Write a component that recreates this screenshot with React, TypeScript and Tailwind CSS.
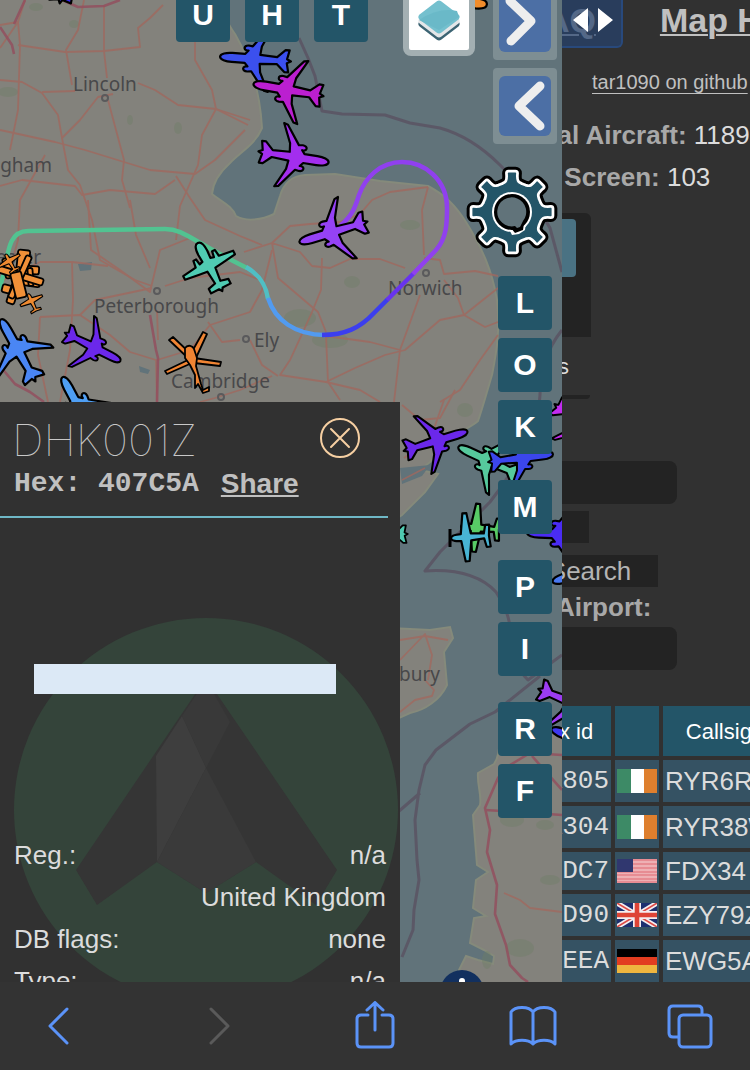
import { useState } from "react";

const AIRLINER =
  "M0 -35C3 -35 4.500 -29 4.500 -23L4.500 -10L8 -7C7 -12 13 -13 13 -7L12.500 -3L31 11L32 15L13 6L4.500 5L3.500 22L11 30L11 34L2 32L0 36L-2 32L-11 34L-11 30L-3.500 22L-4.500 5L-13 6L-32 15L-31 11L-12.500 -3L-13 -7C-13 -13 -7 -12 -8 -7L-4.500 -10L-4.500 -23C-4.500 -29 -3 -35 0 -35Z";
const PROP =
  "M0 -27C4 -27 5 -21 5 -16L4.500 -8L8 -7L9 -13L12 -13L13 -6L28 -4L28 0L13 2L4.500 3L3 17L11 19L11 24L2 24L0 27L-2 24L-11 24L-11 19L-3 17L-4.500 3L-13 2L-28 0L-28 -4L-13 -6L-12 -13L-9 -13L-8 -7L-4.500 -8L-5 -16C-5 -21 -4 -27 0 -27Z";
const LIGHT =
  "M0 -18C3 -18 3.500 -12 3.500 -8L24 -5L24 -1L3.500 2L2.500 15L11 17L11 21L0 20L-11 21L-11 17L-2.500 15L-3.500 2L-24 -1L-24 -5L-3.500 -8C-3.500 -12 -3 -18 0 -18Z";

interface Aircraft {
  shape: string;
  x: number;
  y: number;
  heading: number;
  color: string;
  scale: number;
}

const AIRCRAFT: Aircraft[] = [
  { shape: AIRLINER, x: 66, y: -32, heading: 10, color: "#3a2cf0", scale: 1 },
  { shape: AIRLINER, x: 255, y: 59, heading: 274, color: "#3b50ee", scale: 1 },
  { shape: AIRLINER, x: 288, y: 90, heading: 280, color: "#bb1fd0", scale: 1 },
  { shape: AIRLINER, x: 294, y: 157, heading: 99, color: "#a32eee", scale: 1 },
  { shape: AIRLINER, x: 333, y: 232, heading: 253, color: "#9542f5", scale: 1 },
  { shape: PROP, x: 210, y: 267, heading: 333, color: "#50cbb2", scale: 1 },
  { shape: AIRLINER, x: 18, y: 350, heading: 331, color: "#4a86f4", scale: 1 },
  { shape: AIRLINER, x: 93, y: 347, heading: 117, color: "#6b28ea", scale: 0.88 },
  { shape: AIRLINER, x: 79, y: 408, heading: 332, color: "#4f9ff4", scale: 1 },
  { shape: AIRLINER, x: 436, y: 441, heading: 73, color: "#6b28ea", scale: 0.94 },
  { shape: AIRLINER, x: 489, y: 461, heading: 295, color: "#56c99c", scale: 0.96 },
  { shape: AIRLINER, x: 521, y: 458, heading: 83, color: "#3b46ec", scale: 0.92 },
  { shape: LIGHT, x: 479, y: 528, heading: 275, color: "#58cb66", scale: 1 },
  { shape: LIGHT, x: 469, y: 537, heading: 266, color: "#48b4d4", scale: 1 },
  { shape: AIRLINER, x: 379, y: 535, heading: 268, color: "#4fc9b0", scale: 0.8 },
  { shape: AIRLINER, x: 562, y: 534, heading: 272, color: "#4a2cf4", scale: 1 },
  { shape: AIRLINER, x: 580, y: 424, heading: 128, color: "#c22cf0", scale: 0.9 },
  { shape: AIRLINER, x: 571, y: 702, heading: 112, color: "#9b3cf2", scale: 0.98 },
  { shape: AIRLINER, x: 584, y: 742, heading: 292, color: "#3e38f0", scale: 1 },
  { shape: AIRLINER, x: 586, y: 571, heading: 252, color: "#4878f0", scale: 1 },
  { shape: PROP, x: 460, y: 2, heading: 95, color: "#f08c2c", scale: 1 },
  { shape: LIGHT, x: 10, y: 262, heading: 330, color: "#ee8a30", scale: 0.5 },
  { shape: LIGHT, x: 32, y: 302, heading: 335, color: "#ee8a30", scale: 0.5 },
];

// parked aircraft piled on one spot: left, top, width, height, rotation
const CLUSTER: [number, number, number, number, number][] = [
  [17, 250, 12, 26, 6],
  [4, 258, 9, 20, -12],
  [22, 266, 17, 8, 4],
  [20, 278, 20, 8, 8],
  [2, 286, 18, 8, 14],
  [9, 284, 8, 20, 18],
  [28, 268, 5, 18, -4],
  [-4, 272, 48, 7, 17],
  [17, 254, 6, 46, 24],
  [13, 272, 11, 26, -14],
];

const ROADS = [
  "M0 48L18 22L25 0",
  "M18 22L0 25M18 22L20 45L18 110L10 150",
  "M18 45L65 52L104 51L140 47L138 28L150 18L163 5",
  "M104 5L104 51L107 78",
  "M84 0L78 30L66 50L72 85",
  "M0 80L22 82L42 93L58 115L62 138L80 120L98 97L113 94",
  "M42 92L75 91M138 83L155 90L178 105L216 109L250 120",
  "M108 100L124 160L122 180L130 208",
  "M0 130L55 142L85 150L124 162L150 170L195 174L215 160L245 130",
  "M216 109L202 135L198 165L180 206L176 240",
  "M62 138L68 170L80 185L92 220L100 260L135 280L152 286",
  "M45 155L20 200L18 240L12 262",
  "M0 186L22 180L75 186L82 195L110 190L155 194L175 180",
  "M176 176L190 198L205 220L240 236L262 245",
  "M195 0L195 60L212 90L216 109L248 125",
  "M88 200L91 250L120 270L150 292L160 250L190 238",
  "M130 200L136 235L150 268",
  "M0 282L40 262L72 262L108 266",
  "M72 262L73 300L70 350L60 402",
  "M40 317L80 315L110 335L130 352L156 360L157 402",
  "M40 317L38 355L48 402M80 315L95 300L152 288",
  "M157 360L190 350L210 325L250 312L262 290L272 250",
  "M165 286L190 278L240 272L260 280",
  "M208 322L222 342L240 340M250 340L262 365L278 376",
  "M244 252L272 243L290 226L310 224L340 222L360 214L372 200L390 192L428 187",
  "M272 243L278 278L318 312L326 332M272 243L300 252L312 266L330 268L350 259L380 259L405 268",
  "M322 258L321 290L312 312L290 360L280 375L326 382L355 368L385 355L405 350L440 320L464 315",
  "M326 335L328 382L340 400M326 382L360 390L380 402",
  "M326 336L370 342L400 350L394 402M400 350L420 295",
  "M428 187L422 210L424 255M424 258L440 260L444 274L475 271L498 276",
  "M444 280L458 298L464 315L485 327L498 322M464 315L498 288",
  "M498 335L480 360L460 390L440 402",
  "M200 402L215 398L240 390L272 376M157 310L158 340",
  "M402 405L420 420L440 418L455 390M402 480L425 468M444 400L430 440L404 458",
  "M400 640L425 636L448 640M400 660L425 634L432 655L428 680M400 712L415 700L432 696L434 690L425 680",
];

const MOTORWAYS = [
  "M0 27L12 45L14 54",
  "M14 24L25 0M62 0L78 7L104 6L120 0",
  "M150 315L156 350L158 358L157 402",
  "M0 366L15 384L30 392L44 402",
  "M562 755L530 753L510 765L498 778L485 808L490 830L487 852L497 885L495 914L506 945L510 965L522 978L528 982",
  "M532 756L562 790M485 810L520 812L562 815",
];

const WOODS: [number, number, number, number][] = [
  [8, 92, 10, 5],
  [36, 7, 7, 4],
  [74, 24, 5, 4],
  [178, 128, 4, 6],
  [130, 120, 3, 5],
  [300, 318, 16, 9],
  [330, 340, 18, 8],
  [352, 282, 8, 6],
  [410, 225, 10, 5],
  [465, 410, 8, 7],
  [512, 820, 12, 7],
  [545, 825, 9, 5],
  [520, 948, 14, 9],
  [487, 960, 5, 9],
  [550, 880, 10, 5],
];

const TRACK = [
  { d: "M-2 290C10 270 2 231 28 231L165 229C184 229 190 240 247 268", color: "#52c391" },
  { d: "M246 267C260 275 266 285 268 299", color: "#50bfc4" },
  { d: "M268 298C275 320 295 335 325 335", color: "#529bf0" },
  { d: "M322 335C345 335 360 328 374 313L388 299", color: "#3c3eee" },
  { d: "M387 300L414 273", color: "#6833ee" },
  { d: "M413 274L436 250C447 238 447 222 447 208C447 180 425 162 402 162C380 162 365 178 359 195C355 208 352 216 340 226", color: "#9040ee" },
];

const polar = (r: number, deg: number) => {
  const a = (deg * Math.PI) / 180;
  return `${(r * Math.cos(a)).toFixed(2)} ${(r * Math.sin(a)).toFixed(2)}`;
};

// eight rounded teeth joined by concave valleys
const GEAR =
  `M${polar(39, -5)}` +
  Array.from({ length: 8 }, (_, i) => {
    const t = i * 45;
    return `L${polar(39, t + 5)}C${polar(29, t + 5)} ${polar(29, t + 11)} ${polar(28, t + 18)}L${polar(28, t + 27)}C${polar(29, t + 34)} ${polar(29, t + 40)} ${polar(39, t + 40)}`;
  }).join("") +
  "Z";

function MapCanvas() {
  return (
    <svg
      className="absolute inset-0 h-full w-full"
      viewBox="0 0 562 982"
      preserveAspectRatio="xMaxYMin slice"
      role="img"
      aria-label="Aircraft map"
    >
      <rect width="562" height="982" fill="#61737a" />
      <g fill="#83827c" stroke="#858a7b" strokeWidth="2">
        <path d="M-5 -5H214C222 10 226 22 235 34C250 60 260 90 262 128C255 145 240 152 230 163C220 172 213 182 212 194C222 202 232 206 236 216C246 222 262 220 274 214L280 196C284 182 292 176 305 175L335 174L380 181L428 186C445 195 455 205 466 222C482 248 492 270 497 300C500 330 497 350 492 375C486 395 482 410 478 421C470 428 458 432 448 440L430 462L420 470L438 474L425 492L402 515L380 530H-5Z" />
        <path d="M390 628L430 630L450 627L453 638L444 652L447 685C440 700 425 710 410 713L390 722Z" />
        <path d="M570 733L500 733C499 745 500 755 494 764L478 773C477 785 482 795 480 805L473 815L477 865L488 872L476 880L473 908L486 916L474 918L470 943L484 950L494 956L493 964L478 960L466 956L459 970L454 990H570Z" />
      </g>
      <g fill="#6f7f66" opacity="0.4">
        {WOODS.map(([cx, cy, rx, ry]) => (
          <ellipse key={`${cx}-${cy}`} cx={cx} cy={cy} rx={rx} ry={ry} />
        ))}
      </g>
      <path d="M78 264L92 262L91 270L80 271ZM139 366L150 370L148 374L140 372ZM400 468L430 465L422 476L402 484Z" fill="#61737a" />
      <g fill="none" stroke="#a0695f" strokeWidth="1.8" strokeLinejoin="round" opacity="0.8">
        {ROADS.map((d) => (
          <path key={d} d={d} />
        ))}
        <path d="M504 893L520 900L530 908L562 912" />
      </g>
      <g fill="none" stroke="#93505f" strokeWidth="2.6" strokeLinejoin="round" opacity="0.85">
        {MOTORWAYS.map((d) => (
          <path key={d} d={d} />
        ))}
      </g>
      <g fill="none" stroke="#594f60" strokeWidth="3" strokeLinejoin="round" opacity="0.75">
        <path d="M299 38L308 58L315 76L322 111L342 114L385 115L410 123L440 128C465 135 485 150 500 165C525 190 540 210 550 228L562 272" />
        <path d="M562 330C550 345 540 365 540 395C538 430 515 470 490 502L440 552L425 571C455 569 480 575 496 592C505 605 510 618 512 640C512 660 520 672 528 680L562 655" />
        <path d="M540 676L495 712L470 724L436 750L425 765L419 790L415 820L417 860L419 880L414 910L413 930L402 957M420 793L398 812" />
      </g>

      <g fill="#48484a" fontFamily="'Noto Sans', sans-serif" fontSize="19">
        <text x="73" y="91">Lincoln</text>
        <text x="52" y="172" textAnchor="end">Nottingham</text>
        <text x="41" y="264" textAnchor="end">Leicester</text>
        <text x="94" y="313">Peterborough</text>
        <text x="388" y="295">Norwich</text>
        <text x="254" y="347">Ely</text>
        <text x="171" y="388">Cambridge</text>
        <text x="440" y="681" textAnchor="end">Canterbury</text>
      </g>
      <g fill="none" stroke="#5a5a5c" strokeWidth="2">
        <circle cx="105" cy="98" r="3" />
        <circle cx="157" cy="291" r="3" />
        <circle cx="426" cy="273" r="3" />
        <circle cx="246" cy="339" r="3" />
        <circle cx="221" cy="397" r="3" />
      </g>

      <g fill="none" strokeWidth="4.5">
        {TRACK.map((t) => (
          <path key={t.d} d={t.d} stroke={t.color} />
        ))}
      </g>

      <g fill="#f09038" stroke="#000" strokeWidth="1.8">
        {CLUSTER.map(([x, y, w, h, angle]) => (
          <rect
            key={`${x}-${y}`}
            x={x}
            y={y}
            width={w}
            height={h}
            rx="2"
            transform={`rotate(${angle} ${x + w / 2} ${y + h / 2})`}
          />
        ))}
      </g>

      {AIRCRAFT.map((a) => (
        <path
          key={`${a.x}-${a.y}`}
          d={a.shape}
          fill={a.color}
          stroke="#000"
          strokeWidth="2.2"
          strokeLinejoin="round"
          transform={`translate(${a.x} ${a.y}) rotate(${a.heading}) scale(${a.scale})`}
        />
      ))}
      <path d="M450 529V547" stroke="#000" strokeWidth="3" />

      {/* Helicopter */}
      <g stroke="#000" strokeWidth="1.8" strokeLinejoin="round" fill="#f08433">
        <path d="M173 337L192 355L189 359L169 340ZM203 332L207 334L195 360L189 357ZM194 358L221 362L220 366L194 363ZM165 371L190 359L192 363L167 374Z" />
        <path d="M185 348C188 344 193 346 194 349L197 358L196 366L201 384L203 390L209 387L209 391L203 393L198 384L195 388L195 375L190 365L185 358Z" />
      </g>
    </svg>
  );
}

function KeyButton({ label }: { label: string }) {
  return (
    <button className="flex h-[54px] w-[54px] items-center justify-center rounded bg-[#235568] text-[30px] leading-8 font-bold text-white">
      {label}
    </button>
  );
}

function MapControls() {
  return (
    <>
      <div className="absolute top-0 right-[194px] -mt-3 flex gap-[15px]">
        <KeyButton label="U" />
        <KeyButton label="H" />
        <KeyButton label="T" />
      </div>

      <button
        aria-label="Layers"
        className="absolute top-0 right-[87px] -mt-4 h-[72px] w-[72px] rounded-lg border-[6px] border-[#a3afb2] bg-white"
      >
        <svg viewBox="0 0 60 60" className="h-full w-full" strokeWidth="7" strokeLinejoin="round">
          <path d="M30 22L47 34L30 47L13 34Z" fill="#3c6473" stroke="#3c6473" />
          <path d="M30 19L47 31L30 44L13 31Z" fill="#e4e6e8" stroke="#e4e6e8" />
          <path d="M30 14L47 27L30 40L13 27Z" fill="#74c0ce" stroke="#74c0ce" />
          <path d="M10 30Q30 17 48 21L50 27L30 40Z" fill="#6ab9c8" />
        </svg>
      </button>

      <div className="absolute top-0 right-0 -mt-4 flex flex-col items-end">
        <div className="flex flex-col gap-2 pr-[5px]">
          <button aria-label="Expand" className="h-[76px] w-16 rounded bg-[#7e8e93] px-1.5 py-2">
            <svg viewBox="0 0 52 60" className="h-full w-full">
              <rect width="52" height="60" rx="6" fill="#4c6fa5" />
              <path d="M11 9L32 29L12 49" fill="none" stroke="#eee" strokeWidth="9" strokeLinecap="round" strokeLinejoin="round" />
            </svg>
          </button>
          <button aria-label="Collapse" className="h-[76px] w-16 rounded bg-[#7e8e93] px-1.5 py-2">
            <svg viewBox="0 0 52 60" className="h-full w-full">
              <rect width="52" height="60" rx="6" fill="#4c6fa5" />
              <path d="M41 10L20 30L41 50" fill="none" stroke="#eee" strokeWidth="9" strokeLinecap="round" strokeLinejoin="round" />
            </svg>
          </button>
        </div>

        <button aria-label="Settings" className="mt-5 mr-0.5 h-24 w-24">
          <svg viewBox="-48 -48 96 96" className="h-full w-full">
            <path d={GEAR} fill="#000" stroke="#000" strokeWidth="13" strokeLinejoin="round" />
            <path d={GEAR} fill="#fff" stroke="#fff" strokeWidth="7" strokeLinejoin="round" />
            <path d={GEAR} fill="#235568" stroke="#235568" strokeWidth="1.5" strokeLinejoin="round" />
            <circle r="20" fill="#fff" />
            <path d="M-3 17L0 23L7 22L13 18L14 10Z" fill="#fff" />
            <circle r="18" fill="#000" />
            <path d="M-1 16L3 21L11 18L12 11Z" fill="#000" />
            <path d="M3 14A14.500 14.500 0 1 1 11 9L8 15L5 16Z" fill="#61737a" />
          </svg>
        </button>

        <div className="mt-4 flex flex-col gap-[26px] pr-2.5">
          <div className="flex flex-col gap-2">
            <KeyButton label="L" />
            <KeyButton label="O" />
            <KeyButton label="K" />
          </div>
          <KeyButton label="M" />
          <div className="flex flex-col gap-2">
            <KeyButton label="P" />
            <KeyButton label="I" />
          </div>
          <div className="flex flex-col gap-2">
            <KeyButton label="R" />
            <KeyButton label="F" />
          </div>
        </div>
      </div>

      <button
        aria-label="Attribution"
        className="absolute right-[78px] bottom-0 -mb-8 flex h-11 w-11 justify-center rounded-full bg-[#12305f] pt-2"
      >
        <span className="h-1.5 w-1.5 rounded-full bg-white" />
      </button>
    </>
  );
}

const DETAILS = [
  { label: "Reg.:", value: "n/a" },
  { label: "", value: "United Kingdom" },
  { label: "DB flags:", value: "none" },
  { label: "Type:", value: "n/a" },
];

function InfoPanel({ onClose }: { onClose: () => void }) {
  return (
    <aside className="absolute top-[402px] bottom-0 left-0 w-[400px] overflow-hidden bg-[#313131] text-[#dcdcdc]">
      <svg viewBox="0 0 384 384" className="absolute top-[216px] left-3.5 w-96">
        <circle cx="192" cy="192" r="192" fill="#34443a" />
        <path d="M192 60L323 252L302 287L242 244L192 275L143 244L83 287L62 252Z" fill="#353535" />
        <path d="M168 98L192 62L216 104L192 150Z" fill="#393939" />
        <path d="M142 138L168 98L192 150L143 244Z" fill="#3e3e3e" />
        <path d="M192 150L242 244L192 275L143 244Z" fill="#3a3a3a" />
      </svg>

      <div className="relative">
        <header className="mr-3 h-[116px] border-b-2 border-[#6fb8c6] pt-3 pl-3">
          <div className="flex h-12 items-center justify-between pr-7">
            <h1 className="pt-1 font-['Inter'] text-[44px] leading-[52px] font-thin text-[#c8c8c8]">DHK001Z</h1>
            <button aria-label="Close" onClick={onClose}>
              <svg viewBox="0 0 40 40" className="h-10 w-10" fill="none" stroke="#f6cfa2" strokeWidth="2">
                <circle cx="20" cy="20" r="19" />
                <path d="M11 11L29 29M29 11L11 29" strokeLinecap="round" />
              </svg>
            </button>
          </div>
          <div className="mt-1 flex items-center gap-[22px] pl-0.5 text-[28px] leading-9 font-bold text-[#c0c0c0]">
            <span className="font-['Liberation_Mono',monospace] whitespace-pre">Hex: 407C5A</span>
            <a href="#share" className="underline decoration-2 underline-offset-2">
              Share
            </a>
          </div>
        </header>

        <div className="mt-[146px] mr-16 ml-[34px] h-[30px] bg-[#dce9f6]" />

        <dl className="mt-[140px] pr-3.5 pl-3.5 text-[26px] leading-[42px]">
          {DETAILS.map((d, i) => (
            <div key={i} className="flex justify-between">
              <dt>{d.label}</dt>
              <dd>{d.value}</dd>
            </div>
          ))}
        </dl>
      </div>
    </aside>
  );
}

type Country = "ie" | "us" | "gb" | "de";

function Flag({ country }: { country: Country }) {
  return (
    <svg viewBox="0 0 40 24" className="block h-6 w-10" role="img" aria-label={country}>
      {country === "ie" && (
        <>
          <rect width="40" height="24" fill="#fff" />
          <rect width="14" height="24" fill="#3d8a66" />
          <rect x="27" width="13" height="24" fill="#de7f2e" />
        </>
      )}
      {country === "us" && (
        <>
          <rect width="40" height="24" fill="#eeb0b4" />
          <path d="M0 1H40M0 5H40M0 9H40M0 13H40M0 16H40M0 20H40M0 23H40" stroke="#e58088" strokeWidth="1.6" />
          <rect width="16" height="13" fill="#30376f" />
        </>
      )}
      {country === "gb" && (
        <>
          <rect width="40" height="24" fill="#1d2f6f" />
          <path d="M0 0L40 24M40 0L0 24" stroke="#f4eef0" strokeWidth="5" />
          <path d="M0 0L40 24M40 0L0 24" stroke="#dd4a45" strokeWidth="1.6" />
          <path d="M20 0V24M0 12H40" stroke="#f4eef0" strokeWidth="8" />
          <path d="M20 0V24M0 12H40" stroke="#de4436" strokeWidth="4.6" />
        </>
      )}
      {country === "de" && (
        <>
          <rect width="40" height="8" fill="#000" />
          <rect y="8" width="40" height="8" fill="#e23d20" />
          <rect y="16" width="40" height="8" fill="#eeb63f" />
        </>
      )}
    </svg>
  );
}

const ROWS: { hex: string; country: Country; callsign: string; height: string }[] = [
  { hex: "4CA805", country: "ie", callsign: "RYR6R", height: "h-[42px]" },
  { hex: "4CA304", country: "ie", callsign: "RYR38W", height: "h-[42px]" },
  { hex: "A8DDC7", country: "us", callsign: "FDX34", height: "h-[38px]" },
  { hex: "407D90", country: "gb", callsign: "EZY79Z", height: "h-[42px]" },
  { hex: "3C6EEA", country: "de", callsign: "EWG5A", height: "h-[42px]" },
];

function Sidebar() {
  return (
    <section className="relative w-[188px] shrink-0 overflow-hidden bg-[#313131] text-[26px] whitespace-nowrap text-[#dcdcdc]">
      <nav className="-ml-9 flex h-10 items-center gap-16 text-[34px] font-bold text-[#c0c0c0]">
        <a href="#faq" className="underline decoration-2 underline-offset-2">
          FAQ
        </a>
        <a href="#help" className="underline decoration-2 underline-offset-2">
          Map Help
        </a>
      </nav>
      <button
        aria-label="Resize sidebar"
        className="absolute top-0 left-0 -mt-3 flex h-[60px] w-[61px] items-center rounded-r-md border-2 border-l-0 border-[#28497c] bg-[#26436fb3] pt-1 pl-2.5"
      >
        <svg viewBox="0 0 42 28" className="h-7 w-[42px]" fill="#fff">
          <path d="M16 2V26L1 14ZM26 2V26L41 14Z" />
        </svg>
      </button>

      <p className="mt-[26px] ml-[30px] text-xl leading-8 text-[#c0c0c0]">
        <a href="#github" className="underline decoration-1 underline-offset-4">
          tar1090 on github
        </a>
      </p>

      <div className="mt-4 -ml-[43px] leading-[42px]">
        <p>
          <b className="text-[#a8a8a8]">Total Aircraft:</b> 1189
        </p>
        <p>
          <b className="ml-0.5 text-[#a8a8a8]">On Screen:</b> 103
        </p>
      </div>

      <div className="mt-[15px] h-[124px] w-[29px] rounded-tr-md bg-[#232323] pt-1.5">
        <div className="h-[58px] w-3.5 rounded-r bg-[#4a7283]" />
      </div>
      <p className="mt-3.5 -ml-1 text-[22px] leading-8">s</p>
      <div className="mt-3 h-1 w-7 rounded-br bg-[#232323]" />

      <input aria-label="Filter" className="mt-[62px] block h-[43px] w-[115px] rounded-r-lg bg-[#232323] px-2" />
      <div className="mt-[7px] h-8 w-[27px] bg-[#232323]" />
      <button className="mt-3 -ml-10 block h-8 w-[136px] bg-[#232323] leading-8 text-[#b4b4b4]">Search</button>
      <label htmlFor="airport" className="-ml-1.5 block leading-10 font-bold text-[#a8a8a8]">
        Airport:
      </label>
      <input id="airport" className="block h-[43px] w-[115px] rounded-r-lg bg-[#232323] px-2" />

      <table className="mt-8 -ml-[53px] w-[282px] table-fixed border-separate border-spacing-1">
        <colgroup>
          <col className="w-[98px]" />
          <col className="w-11" />
          <col className="w-[124px]" />
        </colgroup>
        <thead className="text-[22px] text-white">
          <tr className="h-[50px]">
            <th className="bg-[#235568] p-0 font-normal">Hex id</th>
            <th className="bg-[#235568] p-0" aria-label="Country" />
            <th className="bg-[#235568] p-0 font-normal">Callsign</th>
          </tr>
        </thead>
        <tbody>
          {ROWS.map((r) => (
            <tr key={r.hex} className={r.height}>
              <td className="bg-[#355263] p-0 pr-0.5 text-right font-['Liberation_Mono',monospace] leading-8">
                {r.hex}
              </td>
              <td className="bg-[#355263] p-0 pl-0.5">
                <Flag country={r.country} />
              </td>
              <td className="bg-[#355263] p-0 pl-0.5 leading-8">{r.callsign}</td>
            </tr>
          ))}
        </tbody>
      </table>
    </section>
  );
}

function BrowserBar() {
  const tab = "flex h-12 w-12 items-center justify-center";
  return (
    <footer className="flex h-[88px] shrink-0 justify-between bg-[#333] px-9 pt-[19px]">
      <button aria-label="Back" className={tab}>
        <svg viewBox="0 0 48 48" className="h-12 w-12" fill="none" stroke="#5b93f8" strokeWidth="3" strokeLinecap="round" strokeLinejoin="round">
          <path d="M31 8L14 25L31 42" />
        </svg>
      </button>
      <button aria-label="Forward" className={tab} disabled>
        <svg viewBox="0 0 48 48" className="h-12 w-12" fill="none" stroke="#5a5a5a" strokeWidth="3" strokeLinecap="round" strokeLinejoin="round">
          <path d="M17 8L34 25L17 42" />
        </svg>
      </button>
      <button aria-label="Share page" className={tab}>
        <svg viewBox="0 0 48 48" className="h-12 w-12" fill="none" stroke="#5b93f8" strokeWidth="3" strokeLinecap="round" strokeLinejoin="round">
          <path d="M17 14H10Q6 14 6 18V42Q6 46 10 46H38Q42 46 42 42V18Q42 14 38 14H31M24 29V2M16 9L24 1.500L32 9" />
        </svg>
      </button>
      <button aria-label="Bookmarks" className={tab}>
        <svg viewBox="0 0 48 48" className="h-12 w-12" fill="none" stroke="#5b93f8" strokeWidth="3" strokeLinejoin="round">
          <path d="M24 11C20 5 6 5 2 11V43C7 38 19 38 24 43C29 38 41 38 46 43V11C42 5 28 5 24 11ZM24 11V43" />
        </svg>
      </button>
      <button aria-label="Tabs" className={tab}>
        <svg viewBox="0 0 48 48" className="h-12 w-12" fill="none" stroke="#5b93f8" strokeWidth="3" strokeLinejoin="round">
          <path d="M36 14V9Q36 5 32 5H7Q3 5 3 9V32Q3 36 7 36H13" />
          <rect x="13" y="14" width="32" height="32" rx="4" />
        </svg>
      </button>
    </footer>
  );
}

export default function App() {
  const [showInfo, setShowInfo] = useState(true);

  return (
    <div className="flex h-screen flex-col overflow-hidden bg-[#313131] font-['Liberation_Sans',Arial,sans-serif]">
      <main className="flex min-h-0 flex-1">
        <div className="relative flex-1 overflow-hidden">
          <MapCanvas />
          <MapControls />
          {showInfo && <InfoPanel onClose={() => setShowInfo(false)} />}
        </div>
        <Sidebar />
      </main>
      <BrowserBar />
    </div>
  );
}
